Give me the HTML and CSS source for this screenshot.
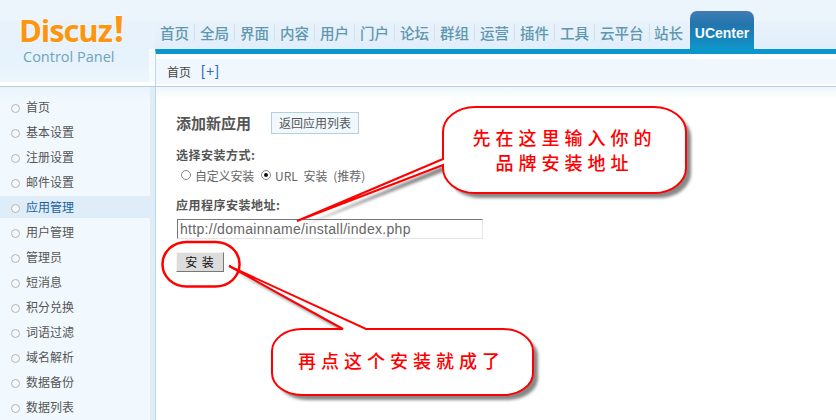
FILE: index.html
```
<!DOCTYPE html>
<html lang="zh-CN">
<head>
<meta charset="utf-8">
<title>Discuz! Control Panel</title>
<link rel="stylesheet" href="styles.css">
</head>
<body>
<div class="page">
  <header class="header">
    <div class="logo">
      <div class="logo-mark">Discuz<span class="logo-bang">!</span></div>
      <div class="logo-sub">Control Panel</div>
    </div>
    <div class="head-right">
      <nav class="nav">
        <a class="nav-item">首页</a>
        <a class="nav-item">全局</a>
        <a class="nav-item">界面</a>
        <a class="nav-item">内容</a>
        <a class="nav-item">用户</a>
        <a class="nav-item">门户</a>
        <a class="nav-item">论坛</a>
        <a class="nav-item">群组</a>
        <a class="nav-item">运营</a>
        <a class="nav-item">插件</a>
        <a class="nav-item">工具</a>
        <a class="nav-item nav-wide">云平台</a>
        <a class="nav-item nav-last">站长</a>
        <a class="nav-tab">UCenter</a>
      </nav>
      <div class="crumb-wrap">
        <div class="crumb"><span>首页</span><span class="crumb-add">[+]</span></div>
      </div>
    </div>
  </header>
  <div class="body">
    <aside class="side">
      <ul class="menu">
        <li>首页</li>
        <li>基本设置</li>
        <li>注册设置</li>
        <li>邮件设置</li>
        <li class="active">应用管理</li>
        <li>用户管理</li>
        <li>管理员</li>
        <li>短消息</li>
        <li>积分兑换</li>
        <li>词语过滤</li>
        <li>域名解析</li>
        <li>数据备份</li>
        <li>数据列表</li>
      </ul>
    </aside>
    <main class="main">
      <div class="title-row">
        <h3 class="title">添加新应用</h3>
        <a class="back-btn">返回应用列表</a>
      </div>
      <div class="label label-first">选择安装方式:</div>
      <div class="radios">
        <span class="radio"></span><span class="radio-text">自定义安装</span>
        <span class="radio radio-on"></span><span class="radio-text radio-url">URL 安装 (推荐)</span>
      </div>
      <div class="label label-second">应用程序安装地址:</div>
      <div class="url-input">http://domainname/install/index.php</div>
      <a class="install-btn">安 装</a>
    </main>
  </div>

  <svg class="marks" width="836" height="420" viewBox="0 0 836 420">
    <defs>
      <filter id="sh" x="-10%" y="-10%" width="125%" height="130%">
        <feGaussianBlur stdDeviation="1.6"/>
      </filter>
    </defs>
    <g fill="#555" opacity=".7" filter="url(#sh)" transform="translate(5 5)">
      <path d="M297 221 L443 159 L443 132 A32 25 0 0 1 475 107 L654 107 A32 25 0 0 1 686 132 L686 168 A32 25 0 0 1 654 193 L475 193 A32 25 0 0 1 443 168 L443 165 Z"/>
      <path d="M229 266 L366 329 L503 329 A30 22 0 0 1 533 351 L533 373 A30 22 0 0 1 503 395 L302 395 A30 22 0 0 1 272 373 L272 351 A30 22 0 0 1 302 329 L343 329 Z"/>
    </g>
    <rect x="162.5" y="242" width="77" height="44.5" rx="24" ry="22" fill="none" stroke="#f00" stroke-width="2.5"/>
    <path class="callout" d="M297 221 L443 159 L443 132 A32 25 0 0 1 475 107 L654 107 A32 25 0 0 1 686 132 L686 168 A32 25 0 0 1 654 193 L475 193 A32 25 0 0 1 443 168 L443 165 Z"/>
    <path class="callout" d="M229 266 L366 329 L503 329 A30 22 0 0 1 533 351 L533 373 A30 22 0 0 1 503 395 L302 395 A30 22 0 0 1 272 373 L272 351 A30 22 0 0 1 302 329 L343 329 Z"/>
  </svg>
  <div class="note note-a">先在这里输入你的<br>品牌安装地址</div>
  <div class="note note-b">再点这个安装就成了</div>
</div>
</body>
</html>
```
FILE: styles.css
```
* { box-sizing: border-box; }
html, body { margin: 0; padding: 0; overflow: hidden; background: #fff; }
.page {
  position: relative;
  width: 836px;
  height: 420px;
  overflow: hidden;
  font-family: "Noto Sans CJK SC", "Liberation Sans", sans-serif;
  font-size: 12px;
  color: #555;
}

/* header */
.header {
  display: flex;
  height: 87px;
  background: linear-gradient(#ecf4fc 0, #ecf4fc 21px, #e8f2fb 21px, #e1eefa 49px);
  border-bottom: 1px solid #b5cfdd;
}
.logo {
  width: 155px;
  height: 86px;
  flex: none;
  background:
    linear-gradient(#fff, #fff) 0 82px / 100% 4px no-repeat,
    linear-gradient(#f4fafe, #f4fafe) right 49px / 6px 37px no-repeat,
    linear-gradient(#ecf4fc 0, #ecf4fc 21px, #e8f2fb 21px, #e6f2fc 60px, #ecf6fd 82px);
  padding: 13px 0 0 19px;
}
.logo-mark {
  font-family: "Open Sans", sans-serif;
  font-weight: 700;
  font-size: 31px;
  line-height: 35px;
  letter-spacing: -1.1px;
  color: #fb9512;
  text-shadow: 0 0 2px #fff, 0 0 2px #fff;
}
.logo-bang { font-size: 36px; line-height: 0; letter-spacing: 0; margin-left: 2px; }
.logo-sub {
  font-family: "Open Sans", sans-serif;
  font-size: 14.5px;
  line-height: 17px;
  margin: 0 0 0 4px;
  color: #6fa3bb;
}
.head-right { flex: 1; display: flex; flex-direction: column; }
.nav {
  display: flex;
  align-items: flex-end;
  height: 49px;
  flex: none;
}
.nav-item {
  width: 40px;
  height: 28px;
  line-height: 23px;
  padding-left: 5px;
  font-size: 14.5px;
  font-weight: 500;
  color: #5f97ae;
  position: relative;
  white-space: nowrap;
}
.nav-item::after {
  content: "";
  position: absolute;
  right: 0;
  top: 3px;
  width: 1px;
  height: 17px;
  background: #d0e1ec;
}
.nav-wide { width: 55px; }
.nav-last { padding-left: 4px; }
.nav-last::after { display: none; }
.nav-tab {
  width: 64px;
  height: 38px;
  border-radius: 7px 7px 0 0;
  background: linear-gradient(#417db4 0, #2374ad 35%, #0f95c8 100%);
  color: #f4fafd;
  font-family: "Liberation Sans", sans-serif;
  font-weight: 700;
  font-size: 14px;
  line-height: 35px;
  padding-top: 5px;
  text-align: center;
}
.crumb-wrap {
  height: 37px;
  border-top: 5px solid #0a97cb;
  border-left: 1px solid #bcd6e4;
  background: #fff;
  padding: 5px 0 2px;
}
.crumb {
  height: 25px;
  background: #f0f8fd;
  display: flex;
  align-items: center;
  gap: 10px;
  padding-left: 11px;
  color: #444;
  line-height: 25px;
}
.crumb-add { color: #2f6ec0; font-family: "Liberation Sans", sans-serif; font-size: 14px; letter-spacing: 1px; }

/* body */
.body { display: flex; height: 333px; }
.side {
  width: 156px;
  flex: none;
  background: linear-gradient(#e8f3fa, #f1f9fe 14px);
  border-right: 6px solid #deedf7;
  position: relative;
}
.side::after {
  content: "";
  position: absolute;
  right: -6px; top: 0; bottom: 0;
  width: 1px;
  background: #bcd6e4;
}
.menu { list-style: none; margin: 0; padding: 9px 0 0; }
.menu li {
  position: relative;
  height: 22px;
  line-height: 22px;
  margin-bottom: 3px;
  padding-left: 26px;
  color: #555;
}
.menu li::before {
  content: "";
  position: absolute;
  left: 11px; top: 8px;
  width: 7px; height: 7px;
  border-radius: 50%;
  border: 1px solid #b5b5b5;
  background: #f4f8fa;
}
.menu li.active { background: #deedf7; color: #1c5f9f; }
.main {
  flex: 1;
  padding: 25px 0 0 20px;
  background: linear-gradient(#eef7fc, #fff 13px);
}
.title-row { display: flex; align-items: center; height: 22px; }
.title { margin: 0; font-size: 15px; line-height: 22px; font-weight: 700; color: #555; width: 95px; }
.back-btn {
  width: 88px;
  height: 22px;
  line-height: 20px;
  text-align: center;
  border: 1px solid #b5cfdd;
  background: #f0f8fd;
  color: #555;
}
.label { font-weight: 700; color: #555; line-height: 16px; letter-spacing: .5px; }
.label-first { margin-top: 13px; }
.label-second { margin-top: 14px; }
.radios { display: flex; align-items: center; height: 16px; margin-top: 4px; padding-left: 5px; }
.radio {
  width: 10px; height: 10px;
  border-radius: 50%;
  border: 1px solid #888;
  background: #fff;
  position: relative;
  margin-right: 4px;
}
.radio-on::after {
  content: "";
  position: absolute;
  left: 2px; top: 2px;
  width: 4px; height: 4px;
  border-radius: 50%;
  background: #111;
}
.radio-text { margin-right: 7px; color: #666; letter-spacing: -.2px; }
.radio-url { letter-spacing: 0; word-spacing: 3px; }
.url-input {
  width: 306px;
  height: 20px;
  margin: 6px 0 0 1px;
  border: 1px solid #e6e6e6;
  border-top-color: #777;
  border-left-color: #777;
  padding-left: 2px;
  font-family: "Liberation Sans", sans-serif;
  font-size: 14px;
  letter-spacing: .3px;
  line-height: 19px;
  color: #666;
  background: #fff;
}
.install-btn {
  display: block;
  width: 48px;
  height: 20px;
  margin-top: 13px;
  background: #dcdcdc;
  border: 1px solid;
  border-color: #f4f4f4 #777 #777 #f4f4f4;
  text-align: center;
  line-height: 18px;
  letter-spacing: 1px;
  color: #111;
}

/* annotations */
.marks { position: absolute; left: 0; top: 0; pointer-events: none; }
.callout { fill: #fff; stroke: #f00; stroke-width: 2; }
.note {
  position: absolute;
  color: #f00;
  font-size: 18px;
  font-weight: 500;
  letter-spacing: 5px;
  line-height: 25px;
  text-align: center;
}
.note-a { left: 443px; top: 125px; width: 243px; }
.note-b { left: 271px; top: 348px; width: 261px; }
```
